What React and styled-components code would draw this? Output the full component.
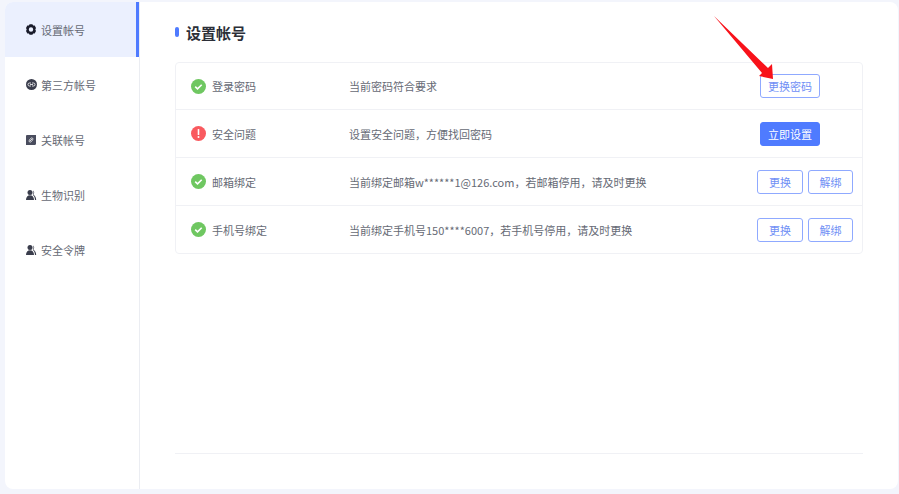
import React from 'react'
import styled, { createGlobalStyle } from 'styled-components'

const Global = createGlobalStyle`
  html, body { margin: 0; padding: 0; background: #f3f5fc; }
  body { font-family: "Noto Sans CJK SC", "Noto Sans", sans-serif; }
  * { box-sizing: border-box; }
`

const Page = styled.div`
  position: relative;
  width: 899px;
  height: 494px;
  overflow: hidden;
  padding: 2px 1px 5px 5px;
`

const Card = styled.div`
  display: flex;
  height: 100%;
  background: #fff;
  border-radius: 8px;
  overflow: hidden;
`

const Side = styled.div`
  width: 135px;
  flex: none;
  border-right: 1px solid #ebedf2;
`

const SideItem = styled.div`
  display: flex;
  align-items: center;
  height: 55px;
  padding-left: 21px;
  font-size: 11px;
  color: #666a75;
  background: ${p => (p.$active ? '#ebf0fe' : 'transparent')};
  border-right: ${p => (p.$active ? '3px solid #4f7bff' : 'none')};
`

const SideIcon = styled.span`
  display: flex;
  width: 15px;
  flex: none;
`

const Main = styled.div`
  flex: 1;
  display: flex;
  flex-direction: column;
  padding: 0 35px 0 35px;
`

const Head = styled.div`
  display: flex;
  align-items: center;
  gap: 7px;
  height: 60px;
  font-size: 15px;
  font-weight: 700;
  color: #2c2f38;
`

const Mark = styled.span`
  width: 4px;
  height: 10px;
  border-radius: 2px;
  background: #4f7bff;
`

const Table = styled.div`
  border: 1px solid #f0f1f5;
  border-radius: 4px;
`

const Row = styled.div`
  display: flex;
  align-items: center;
  height: 46px;
  padding-left: 15px;
  & + & {
    height: 48px;
    border-top: 1px solid #f0f1f5;
  }
`

const Name = styled.div`
  width: 158px;
  flex: none;
  display: flex;
  align-items: center;
  gap: 6px;
  font-size: 11px;
  color: #666a75;
`

const Info = styled.div`
  flex: 1;
  font-size: 11px;
  color: #666a75;
`

const Actions = styled.div`
  display: flex;
  justify-content: flex-end;
  gap: 5px;
  padding-right: ${p => (p.$single ? '42px' : '9px')};
`

const Btn = styled.button`
  height: 24px;
  width: ${p => p.$w}px;
  padding: 0;
  border-radius: 3px;
  border: 1px solid ${p => (p.$primary ? '#4f7bff' : '#8fa9ff')};
  background: ${p => (p.$primary ? '#4f7bff' : '#fff')};
  color: ${p => (p.$primary ? '#fff' : '#6f8ff5')};
  font-family: inherit;
  font-size: 11px;
`

const Foot = styled.div`
  margin-top: auto;
  margin-bottom: 35px;
  border-top: 1px solid #f0f1f5;
`

const Arrow = styled.svg`
  position: absolute;
  left: 710px;
  top: 12px;
  pointer-events: none;
`

const Ok = () => (
  <svg width="15" height="15" viewBox="0 0 15 15">
    <circle cx="7.5" cy="7.5" r="7.5" fill="#6fc761" />
    <path d="M4.2 7.7l2.3 2.2 4.2-4.2" fill="none" stroke="#fff" strokeWidth="1.6" />
  </svg>
)

const Warn = () => (
  <svg width="15" height="15" viewBox="0 0 15 15">
    <circle cx="7.5" cy="7.5" r="7.5" fill="#f95a5f" />
    <rect x="6.7" y="3" width="1.6" height="6" rx=".6" fill="#fff" />
    <circle cx="7.5" cy="11" r="1" fill="#fff" />
  </svg>
)

const Gear = () => (
  <svg width="10" height="11" viewBox="0 0 10 11">
    <path fillRule="evenodd" fill="#1a1c2b" d="M3.6.2h2.800l.7 1.400 1.600-.1L10 4 9.300 5.500 10 7 8.700 9.500l-1.600-.1-.7 1.400H3.600l-.7-1.400-1.600.1L0 7l.7-1.500L0 4l1.300-2.500 1.600.1.700-1.400zM5 3.300a2.200 2.200 0 100 4.400 2.200 2.200 0 000-4.400z" />
  </svg>
)

const Link = () => (
  <svg width="11" height="11" viewBox="0 0 11 11">
    <circle cx="5.5" cy="5.5" r="5.5" fill="#3a3d4c" />
    <path d="M5 4H3.5a1.500 1.500 0 000 3H5M6 4h1.500a1.500 1.500 0 010 3H6M4 5.500h3" fill="none" stroke="#fff" strokeWidth=".8" />
  </svg>
)

const Chain = () => (
  <svg width="10" height="10" viewBox="0 0 10 10">
    <path d="M1 0h9v8.500a1.500 1.500 0 01-1.500 1.500H0V1a1 1 0 011-1z" fill="#4a4d5e" />
    <path d="M3.200 5L5 3.300a1.100 1.100 0 011.700 1.500M6.800 5L5 6.700a1.100 1.100 0 01-1.700-1.500M4 6l2-2" fill="none" stroke="#fff" strokeWidth=".8" />
  </svg>
)

const Users = () => (
  <svg width="11" height="10" viewBox="0 0 11 10">
    <circle cx="4" cy="2.600" r="2.500" fill="#3a3d4c" />
    <path d="M0 10C0 6.800 1.700 5.200 4 5.200S8 6.800 8 10z" fill="#3a3d4c" />
    <path d="M7 .4c1.500.7 1.500 3.500.3 4.400 1.800.8 2.800 2.500 2.900 5.200H9C8.800 7.500 8.100 5.900 6.700 5.100 7.700 3.800 7.800 1.800 7 .4z" fill="#3a3d4c" />
  </svg>
)

const menu = [
  { label: '设置帐号', icon: <Gear />, active: true },
  { label: '第三方帐号', icon: <Link /> },
  { label: '关联帐号', icon: <Chain /> },
  { label: '生物识别', icon: <Users /> },
  { label: '安全令牌', icon: <Users /> },
]

export default function App() {
  return (
    <Page>
      <Global />
      <Card>
        <Side>
          {menu.map(m => (
            <SideItem key={m.label} $active={m.active}>
              <SideIcon>{m.icon}</SideIcon>
              {m.label}
            </SideItem>
          ))}
        </Side>
        <Main>
          <Head>
            <Mark />
            设置帐号
          </Head>
          <Table>
            <Row>
              <Name><Ok />登录密码</Name>
              <Info>当前密码符合要求</Info>
              <Actions $single><Btn $w={60}>更换密码</Btn></Actions>
            </Row>
            <Row>
              <Name><Warn />安全问题</Name>
              <Info>设置安全问题，方便找回密码</Info>
              <Actions $single><Btn $w={60} $primary>立即设置</Btn></Actions>
            </Row>
            <Row>
              <Name><Ok />邮箱绑定</Name>
              <Info>当前绑定邮箱w******1@126.com，若邮箱停用，请及时更换</Info>
              <Actions>
                <Btn $w={46}>更换</Btn>
                <Btn $w={45}>解绑</Btn>
              </Actions>
            </Row>
            <Row>
              <Name><Ok />手机号绑定</Name>
              <Info>当前绑定手机号150****6007，若手机号停用，请及时更换</Info>
              <Actions>
                <Btn $w={46}>更换</Btn>
                <Btn $w={45}>解绑</Btn>
              </Actions>
            </Row>
          </Table>
          <Foot />
        </Main>
      </Card>
      <Arrow width="70" height="72" viewBox="0 0 70 72">
        <path d="M4 4L58 56L62 52L63 67L49 64L52 61Z" fill="#f8121a" />
      </Arrow>
    </Page>
  )
}
